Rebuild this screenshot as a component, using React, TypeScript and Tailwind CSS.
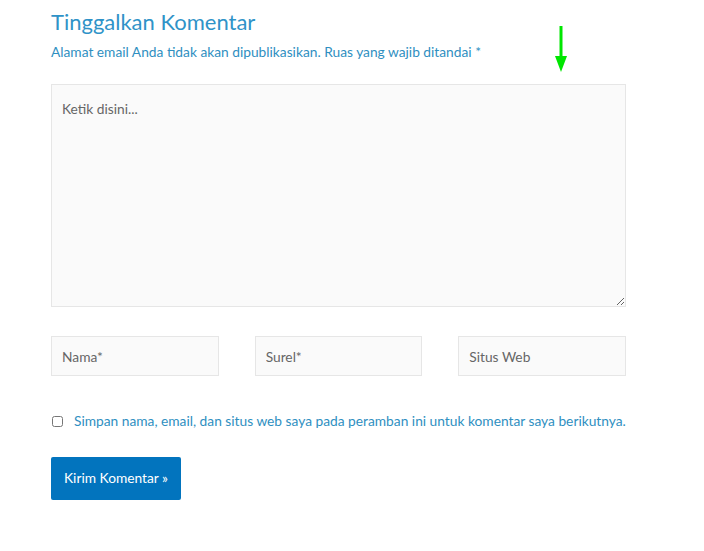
import React from 'react'

const font = { fontFamily: 'Lato, "Open Sans", sans-serif' }

export default function App() {
  return (
    <div className="relative min-h-[551px] w-[704px] bg-white" style={font}>
      {/* annotation arrow */}
      <svg className="absolute left-[554px] top-[26px]" width="14" height="48" viewBox="0 0 14 48">
        <line x1="7" y1="0" x2="7" y2="36" stroke="#00e600" strokeWidth="3" />
        <polygon points="1,30 13,30 7,46" fill="#00e600" />
      </svg>

      <div className="w-[575px] ml-[51px] pt-[8px]">
        <h3 className="text-[22px] leading-[28px] text-[#2f93c8]">Tinggalkan Komentar</h3>
        <p className="mt-[6px] text-[13.75px] leading-[20px] text-[#2f8fc1]">
          Alamat email Anda tidak akan dipublikasikan. Ruas yang wajib ditandai *
        </p>

        <textarea
          placeholder="Ketik disini..."
          className="mt-[22px] block w-full h-[223px] bg-[#fafafa] border border-[#e6e6e6] px-[10px] py-[14px] text-[13.75px] leading-[20px] text-[#666] placeholder:text-[#666] outline-none"
        />

        <div className="mt-[29px] grid grid-cols-3 gap-[36px]">
          {['Nama*', 'Surel*', 'Situs Web'].map((p) => (
            <input
              key={p}
              placeholder={p}
              className="h-[40px] w-full bg-[#fafafa] border border-[#e6e6e6] px-[10px] text-[13.75px] text-[#666] placeholder:text-[#666] outline-none"
            />
          ))}
        </div>

        <label className="mt-[35px] flex items-center gap-[11px] text-[13.75px] leading-[20px] text-[#2f8fc1] whitespace-nowrap">
          <input type="checkbox" className="ml-[1px] w-[11px] h-[11px]" />
          Simpan nama, email, dan situs web saya pada peramban ini untuk komentar saya berikutnya.
        </label>

        <button className="mt-[26px] block w-[130px] h-[43px] rounded-[2px] bg-[#0274be] text-white text-[13.75px]">
          Kirim Komentar »
        </button>
      </div>
    </div>
  )
}
